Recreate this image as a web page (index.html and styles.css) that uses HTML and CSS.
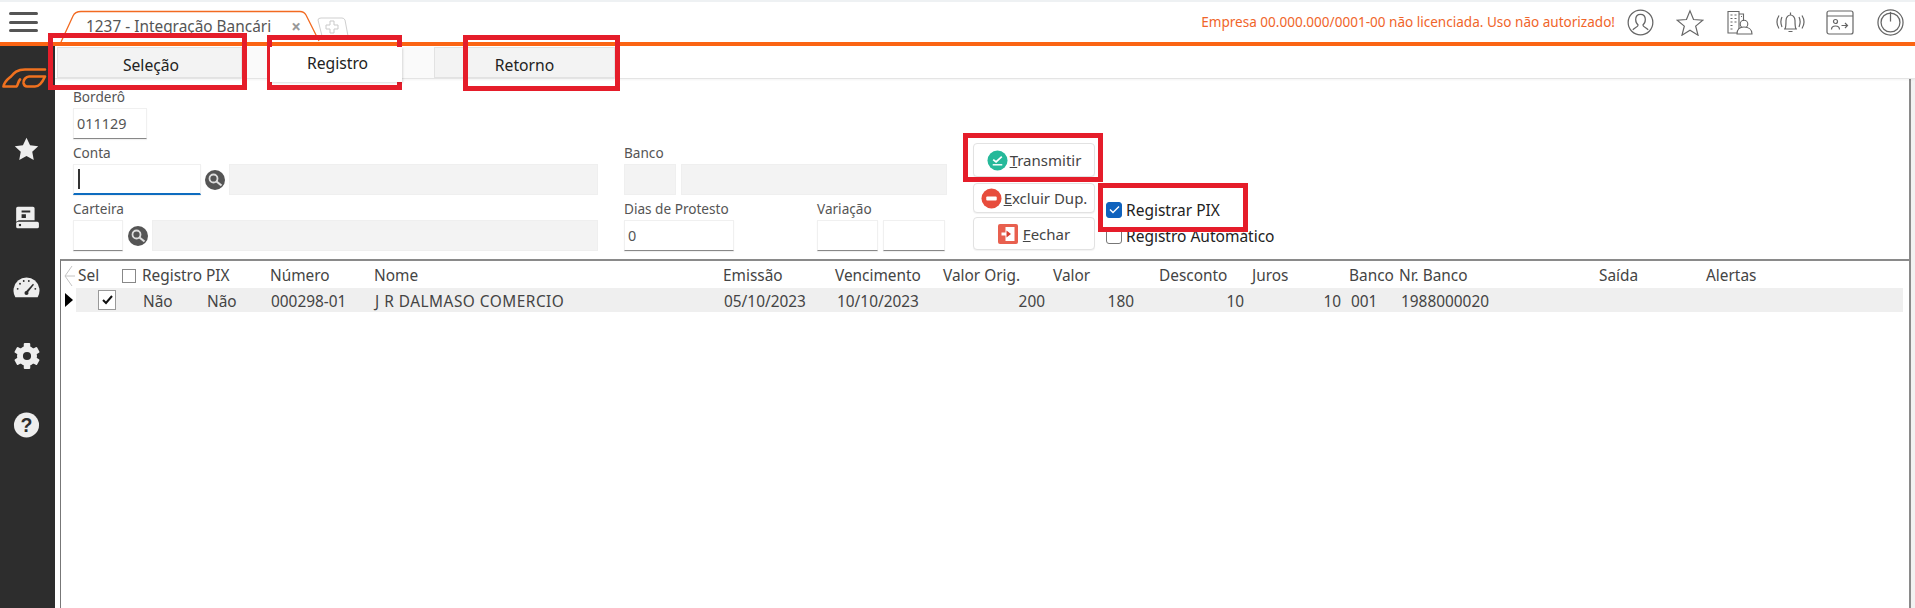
FILE: index.html
```html
<!DOCTYPE html>
<html lang="pt-BR">
<head>
<meta charset="utf-8">
<title>Integração Bancária</title>
<link rel="stylesheet" href="styles.css">
</head>
<body>
<header class="topbar">
  <button class="menu" aria-label="Menu"><span></span><span></span><span></span></button>
  <div class="doc-tab">
    <svg class="doc-tab-shape" width="260" height="32" viewBox="0 0 260 32"><path d="M1 32 L13 6 Q15 1.500 21 1.500 L240 1.500 Q244 1.500 246 5 L259 31" fill="#fff" stroke="#f26a21" stroke-width="1.300"/></svg>
    <span class="doc-tab-label">1237 - Integração Bancári</span>
    <span class="doc-tab-close">×</span>
  </div>
  <svg class="doc-tab-add" width="32" height="20" viewBox="0 0 32 20"><path d="M1 3 Q1 1 4 1 L25 1 Q27 1 28 3 L31 19 L5 19 Z" fill="#fff" stroke="#cfcfcf"/><path d="M13 4 h4 v4 h4 v4 h-4 v4 h-4 v-4 h-4 v-4 h4 z" fill="#fff" stroke="#c9c9c9"/></svg>
  <p class="license">Empresa 00.000.000/0001-00 não licenciada. Uso não autorizado!</p>
  <nav class="top-icons">
    <svg width="27" height="27" viewBox="0 0 28 28" fill="none" stroke="#666" stroke-width="1.300"><circle cx="14" cy="14" r="12.800"/><path d="M14 5.500c-3.400 0-5 2.500-5 5.500 0 2.500 1 4.500 2.500 5.500 0 2-3 2.500-5.500 5M14 5.500c3.400 0 5 2.500 5 5.500 0 2.500-1 4.500-2.500 5.500 0 2 3 2.500 5.500 5"/></svg>
    <svg width="28" height="27" viewBox="0 0 30 29" fill="none" stroke="#666" stroke-width="1.300"><path d="M15 2l3.800 9.300 10 .7-7.700 6.400 2.500 9.700-8.600-5.300-8.600 5.300 2.500-9.700L1.200 12l10-.7z"/></svg>
    <svg width="26" height="26" viewBox="0 0 26 26" fill="none" stroke="#666" stroke-width="1.100"><path d="M1 24V2.500h11V24zM12 5h4.500v7M3.500 6h2M7.500 6h2M3.500 9.500h2M7.500 9.500h2M3.500 13h2M7.500 13h2M3.500 16.500h2M3.500 20h2M14 7.500h1"/><circle cx="17" cy="15" r="3.800"/><path d="M10 25c0-5 3-7 7-7s8 2 8 7z" fill="#fff"/></svg>
    <svg width="29" height="23" viewBox="0 0 29 23" fill="none" stroke="#666" stroke-width="1.200"><path d="M9 18c1-2 1-4 1-8.500C10 6 12.500 4 14.500 4S19 6 19 9.500C19 14 19 16 20 18zM8 18h13M12.500 20.500h4M14.500 1.500V4M6 6c-1.500 3-1.500 6.500 0 10M3 4.500c-2.500 4-2.500 9 0 13M23 6c1.500 3 1.500 6.500 0 10M26 4.500c2.500 4 2.500 9 0 13"/></svg>
    <svg width="28" height="25" viewBox="0 0 28 25" fill="none" stroke="#666" stroke-width="1.200"><rect x="1" y="1" width="26" height="23" rx="2"/><path d="M1 6h26M15.500 15.500h6M19 13l2.500 2.500-2.500 2.500"/><circle cx="9.500" cy="11.500" r="2"/><path d="M5.500 19.500c0-2.500 2-3.500 4-3.500s4 1 4 3.500"/></svg>
    <svg width="27" height="27" viewBox="0 0 28 28" fill="none" stroke="#666" stroke-width="1.300"><circle cx="14" cy="14" r="13"/><circle cx="14" cy="14" r="9.800"/><path d="M14 3v10"/></svg>
  </nav>
</header>

<div class="shell">
  <aside class="sidebar">
    <svg class="logo" width="46" height="21" viewBox="0 0 46 21" fill="none" stroke="#f0711f" stroke-width="2.600" stroke-linejoin="round" stroke-linecap="round"><path d="M43 1.500H23C15 1.500 12 5 9 8.500 6 11 2.500 13 1.500 18.500H14C16 18.500 15.500 14 18 11.500"/><path d="M43 8.500H27C24 8.500 21 12 21.500 15 22 17.500 23 18.500 25 18.500H33C38 18.500 41 13 43 8.500Z"/></svg>
    <svg class="side-icon" width="27" height="26" viewBox="0 0 24 24" fill="#eee"><path d="M12 1.500l3.300 7 7.500.9-5.500 5.200 1.400 7.600-6.700-3.800-6.700 3.800 1.400-7.600L1.200 9.400l7.500-.9z"/></svg>
    <svg class="side-icon" width="26" height="26" viewBox="0 0 24 24" fill="#eee"><path d="M2 3a1.500 1.500 0 0 1 1.500-1.500h14A1.500 1.500 0 0 1 19 3v11H4.500L2 15.500z"/><path d="M2 17a1.500 1.500 0 0 1 1.500-1.500h18A1.500 1.500 0 0 1 23 17v3a1.500 1.500 0 0 1-1.500 1.500h-18A1.500 1.500 0 0 1 2 20z"/><path d="M7 5h8v2H7zM7 8.500h4V12H7z" fill="#2d2d2d"/><rect x="4.500" y="17.500" width="2" height="2" fill="#2d2d2d"/></svg>
    <svg class="side-icon" width="29" height="26" viewBox="0 0 30 28" fill="#eee"><path d="M3 25a14 14 0 1 1 24 0z"/><path d="M14 19l8-8.500 1 1-7 9z" fill="#2d2d2d"/><g fill="#2d2d2d"><circle cx="5.500" cy="16" r="1"/><circle cx="8" cy="10.500" r="1"/><circle cx="12" cy="7.500" r="1"/><circle cx="17.500" cy="7.500" r="1"/><circle cx="24.500" cy="16" r="1"/><circle cx="15" cy="20.500" r="2.200"/></g></svg>
    <svg class="side-icon" width="26" height="26" viewBox="0 0 24 24"><circle cx="12" cy="12" r="6.500" fill="none" stroke="#eee" stroke-width="5.500"/><g fill="#eee"><rect x="9" y="0" width="6" height="5" rx="1"/><rect x="9" y="0" width="6" height="5" rx="1" transform="rotate(60 12 12)"/><rect x="9" y="0" width="6" height="5" rx="1" transform="rotate(120 12 12)"/><rect x="9" y="0" width="6" height="5" rx="1" transform="rotate(180 12 12)"/><rect x="9" y="0" width="6" height="5" rx="1" transform="rotate(240 12 12)"/><rect x="9" y="0" width="6" height="5" rx="1" transform="rotate(300 12 12)"/></g></svg>
    <svg class="side-icon" width="27" height="26" viewBox="0 0 28 28"><circle cx="14" cy="14" r="13.500" fill="#eee"/><text class="help-mark" x="14" y="21.500" text-anchor="middle">?</text></svg>
  </aside>

  <main class="content">
    <div class="page-tabs">
      <div class="page-tab tab-first">Seleção</div>
      <span class="tab-gap gap-a"></span>
      <div class="page-tab tab-active">Registro</div>
      <span class="tab-gap gap-b"></span>
      <div class="page-tab tab-last">Retorno</div>
    </div>

    <div class="panel">
    <section class="form">
      <div class="form-fields">
        <div class="field-row">
          <label class="field"><span class="label">Borderô</span><span class="input w-bordero">011129</span></label>
        </div>
        <div class="columns">
          <div class="col-left">
            <div class="field-row">
              <label class="field"><span class="label">Conta</span><span class="input input-focus w-conta"><i class="caret"></i></span></label>
              <span class="search"><svg width="20" height="20" viewBox="0 0 20 20"><circle cx="10" cy="10" r="10" fill="#555"/><circle cx="8.500" cy="8.500" r="4" fill="none" stroke="#ddd" stroke-width="1.800"/><path d="M11.500 11.500l5 4" stroke="#ddd" stroke-width="2.200"/></svg></span>
              <span class="input input-off grow"></span>
            </div>
            <div class="field-row">
              <label class="field"><span class="label">Carteira</span><span class="input w-carteira"></span></label>
              <span class="search"><svg width="20" height="20" viewBox="0 0 20 20"><circle cx="10" cy="10" r="10" fill="#555"/><circle cx="8.500" cy="8.500" r="4" fill="none" stroke="#ddd" stroke-width="1.800"/><path d="M11.500 11.500l5 4" stroke="#ddd" stroke-width="2.200"/></svg></span>
              <span class="input input-off grow"></span>
            </div>
          </div>
          <div class="col-right">
            <div class="field-row gap-5">
              <label class="field"><span class="label">Banco</span><span class="input input-off w-banco"></span></label>
              <span class="input input-off grow"></span>
            </div>
            <div class="field-row">
              <label class="field w-dias-box"><span class="label">Dias de Protesto</span><span class="input w-dias">0</span></label>
              <label class="field"><span class="label">Variação</span><span class="input w-var"></span></label>
              <span class="input w-var2"></span>
            </div>
          </div>
        </div>
      </div>

      <div class="actions">
        <button class="btn btn-send"><svg width="21" height="21" viewBox="0 0 22 22"><circle cx="11" cy="11" r="10.500" fill="#26b99a"/><path d="M6.500 10l3 2.500 6-5.500" fill="none" stroke="#fff" stroke-width="1.800"/><path d="M6 15.500h10" stroke="#fff" stroke-width="1.500"/></svg><span><u>T</u>ransmitir</span></button>
        <button class="btn btn-del"><svg width="21" height="21" viewBox="0 0 22 22"><circle cx="11" cy="11" r="10.500" fill="#e74c3c"/><rect x="5.500" y="9" width="11" height="4" rx="1" fill="#fff"/></svg><span><u>E</u>xcluir Dup.</span></button>
        <button class="btn btn-close"><svg width="20" height="20" viewBox="0 0 20 20"><rect width="20" height="20" rx="2" fill="#e8604f"/><rect x="7.500" y="3" width="9" height="14" fill="#fff"/><path d="M3.500 8.500h5v3h-5z" fill="#fff"/><path d="M8.500 6.500l4.500 3.500-4.500 3.500z" fill="#d63c2e"/></svg><span><u>F</u>echar</span></button>
      </div>

      <div class="checks">
        <label class="check"><span class="box box-on"><svg width="11" height="9" viewBox="0 0 11 9"><path d="M1 4.500l3 3 6-6" fill="none" stroke="#fff" stroke-width="1.400"/></svg></span>Registrar PIX</label>
        <label class="check"><span class="box"></span>Registro Automático</label>
      </div>
    </section>

    <section class="grid">
      <div class="grid-row grid-head">
        <span class="c-arrow"><svg width="12" height="22" viewBox="0 0 12 22" fill="none" stroke="#c4c4c4"><path d="M9 1L2 11h10M2 11l7 10"/></svg></span>
        <span>Sel</span>
        <span class="head-check"><i class="mini-box"></i>Registro</span>
        <span>PIX</span><span>Número</span><span>Nome</span><span>Emissão</span><span>Vencimento</span><span>Valor Orig.</span><span>Valor</span><span>Desconto</span><span>Juros</span><span>Banco</span><span>Nr. Banco</span><span>Saída</span><span>Alertas</span>
      </div>
      <div class="grid-row grid-data">
        <span class="c-arrow"><svg class="row-arrow" width="8" height="14" viewBox="0 0 8 14"><path d="M0 0l8 7-8 7z" fill="#000"/></svg></span>
        <span class="cell-check"><i class="row-box"><svg width="11" height="10" viewBox="0 0 11 10"><path d="M1 5l3 3 6-7" fill="none" stroke="#111" stroke-width="2"/></svg></i></span>
        <span class="pad-1">Não</span><span class="pad-1">Não</span><span class="pad-1">000298-01</span><span class="pad-1 name-cell">J R DALMASO COMERCIO</span><span class="pad-1">05/10/2023</span><span class="pad-2">10/10/2023</span>
        <span class="num n1">200</span><span class="num n2">180</span><span class="num n3">10</span><span class="num n4">10</span>
        <span class="pad-2">001</span><span class="pad-2">1988000020</span><span></span><span></span>
      </div>
    </section>
    </div>
  </main>
</div>

<div class="mark mark-selecao"></div>
<div class="mark mark-registro"></div>
<div class="mark mark-retorno"></div>
<div class="mark mark-transmitir"></div>
<div class="mark mark-pix"></div>
</body>
</html>
```
FILE: styles.css
```css
* { box-sizing: border-box; }
html, body { margin: 0; height: 100%; overflow: hidden; }
body { font-family: "Noto Sans", "Open Sans", sans-serif; font-size: 14px; color: #444; background: #fff; display: flex; flex-direction: column; position: relative; width: 1915px; height: 608px; }

.topbar { height: 46px; flex: none; display: flex; align-items: flex-end; background: #fff; border-top: 2px solid #eef1f3; border-bottom: 4px solid #fb6413; padding-left: 9px; position: relative; }
.menu { width: 29px; height: 20px; margin: 0 0 10px; padding: 0; border: 0; background: none; display: flex; flex-direction: column; justify-content: space-between; }
.menu span { display: block; height: 3px; background: #555; border-radius: 2px; width: 100%; }
.doc-tab { width: 258px; height: 32px; margin-left: 22px; position: relative; display: flex; align-items: center; padding: 1px 0 0 26px; }
.doc-tab-shape { position: absolute; left: 0; top: 0; }
.doc-tab-label { position: relative; font-size: 15.400px; color: #555; white-space: nowrap; }
.doc-tab-close { position: relative; margin-left: 20px; color: #999; font-size: 17px; font-weight: 700; }
.doc-tab-add { margin: 0 0 5px -1px; }
.license { margin: 0 0 11px auto; color: #f0652a; font-size: 13.550px; white-space: nowrap; }
.top-icons { display: grid; grid-template-columns: repeat(6, 50px); align-items: center; justify-items: center; height: 40px; flex: none; }

.shell { flex: 1; display: flex; min-height: 0; }
.sidebar { width: 55px; flex: none; background: #2d2d2d; display: flex; flex-direction: column; align-items: center; padding: 22px 2px 0 0; gap: 43px; }
.logo { align-self: flex-start; margin: 0 0 4px 2px; }
.help-mark { font: 700 21px "Liberation Sans", sans-serif; fill: #2d2d2d; }

.content { flex: 1; min-width: 0; display: flex; flex-direction: column; background: #f2f2f2; }
.page-tabs { display: flex; height: 33px; padding: 1px 0 0 2px; flex: none; background: #fff; border-bottom: 1px solid #e4e4e4; box-shadow: 0 1px 2px rgba(0,0,0,.05); position: relative; }
.page-tab { background: #f3f3f3; border: 1px solid #e2e2e2; color: #222; font-size: 15.700px; display: flex; align-items: center; justify-content: center; height: 31px; padding-top: 5px; flex: none; }
.tab-first { width: 185px; padding-left: 3px; }
.tab-active { width: 132px; height: 35px; background: #fff; border: 0; box-shadow: 1px 1px 2px rgba(0,0,0,.14); padding: 0 0 4px 3px; position: relative; z-index: 1; }
.tab-last { width: 181px; }
.tab-gap { background: #fafafa; height: 31px; flex: none; }
.gap-a { width: 28px; }
.gap-b { width: 32px; }

.panel { flex: 1; min-height: 0; display: flex; flex-direction: column; background: #fff; margin-right: 4px; border-right: 2px solid #8a8a8a; padding-top: 3px; }
.form { display: flex; padding: 6px 0 0 18px; height: 177px; flex: none; }
.form-fields { width: 875px; display: flex; flex-direction: column; }
.columns { display: flex; gap: 26px; }
.col-left { width: 525px; display: flex; flex-direction: column; }
.col-right { width: 323px; display: flex; flex-direction: column; }
.field-row { display: flex; align-items: flex-end; gap: 4px; margin-bottom: 5px; }
.gap-5 { gap: 5px; }
.field { display: flex; flex-direction: column; }
.label { font-size: 13.600px; line-height: 17px; color: #555; margin-bottom: 3px; white-space: nowrap; }
.input { display: flex; align-items: center; height: 31px; background: #fff; border: 1px solid #f0f0f0; border-bottom: 1px solid #888; font-size: 14.400px; color: #555; padding-left: 3px; box-shadow: 0 1px 1px rgba(0,0,0,.06); }
.input-focus { border-bottom: 2px solid #0d6cbf; }
.input-off { background: #f3f3f3; border: 1px solid #efefef; box-shadow: none; }
.grow { flex: 1; min-width: 0; }
.caret { display: block; width: 1.500px; height: 20px; background: #333; margin-left: 1px; }
.search { width: 20px; height: 31px; display: flex; align-items: center; flex: none; }
.w-bordero { width: 74px; }
.w-conta { width: 128px; }
.w-carteira { width: 50px; }
.w-banco { width: 52px; }
.w-dias-box { width: 189px; }
.w-dias { width: 110px; }
.w-var { width: 61px; }
.w-var2 { width: 62px; margin-left: 1px; }

.actions { width: 122px; margin: 55px 0 0 25px; display: flex; flex-direction: column; flex: none; }
.btn { display: flex; align-items: center; justify-content: center; gap: 2px; background: #fff; border: 1px solid #e2e2e2; border-radius: 4px; font: 15px "Noto Sans", sans-serif; color: #444; padding: 0; box-shadow: 0 1px 1px rgba(0,0,0,.05); }
.btn-send { height: 34px; margin-bottom: 6px; }
.btn-del { height: 30px; margin-bottom: 4px; }
.btn-close { height: 33px; gap: 5px; }
.checks { margin: 113px 0 0 11px; display: flex; flex-direction: column; gap: 9px; }
.check { display: flex; align-items: center; gap: 4px; height: 17px; color: #222; font-size: 15.500px; white-space: nowrap; }
.box { width: 16px; height: 16px; border: 1px solid #777; border-radius: 3px; background: #fff; display: flex; align-items: center; justify-content: center; flex: none; }
.box-on { background: #0f62bd; border-color: #0f62bd; }

.grid { flex: 1; margin-left: 5px; border-left: 1px solid #777; border-top: 2px solid #8a8a8a; padding-right: 6px; }
.grid-row { display: grid; grid-template-columns: 17px 64px 64px 64px 104px 349px 112px 108px 110px 106px 93px 97px 50px 200px 107px 1fr; align-items: center; white-space: nowrap; font-size: 15.400px; color: #444; }
.grid-head { height: 27px; padding-top: 2px; }
.grid-data { height: 24px; }
.grid-data > span { background: #efefef; height: 24px; display: flex; align-items: center; padding-top: 2px; }
.grid-data > .c-arrow { background: transparent; padding-top: 0; }
.c-arrow { display: flex; align-items: center; padding-left: 2px; }
.row-arrow { margin-left: 2px; }
.head-check { display: flex; align-items: center; }
.mini-box { width: 14px; height: 14px; background: #fff; border: 1px solid #888; margin-left: -20px; margin-right: 6px; display: block; flex: none; }
.grid-data > .cell-check { margin-left: -2px; padding: 0 0 0 22px; }
.row-box { width: 18px; height: 20px; border: 1px solid #999; background: #fff; display: flex; align-items: center; justify-content: center; }
.pad-1 { padding-left: 1px; }
.pad-2 { padding-left: 2px; }
.name-cell { letter-spacing: .5px; }
.grid-data > .num { justify-content: flex-end; }
.n1 { padding-right: 8px; }
.n2 { padding-right: 25px; }
.n3 { padding-right: 8px; }
.n4 { padding-right: 8px; }
.mark { position: absolute; border: 5px solid #e51d2a; pointer-events: none; }
.mark-selecao { left: 48px; top: 33px; width: 199px; height: 57px; }
.mark-registro { left: 267px; top: 35px; width: 135px; height: 55px; }
.mark-retorno { left: 463px; top: 35px; width: 157px; height: 56px; }
.mark-transmitir { left: 963px; top: 133px; width: 140px; height: 49px; }
.mark-pix { left: 1098px; top: 183px; width: 150px; height: 49px; }
```
